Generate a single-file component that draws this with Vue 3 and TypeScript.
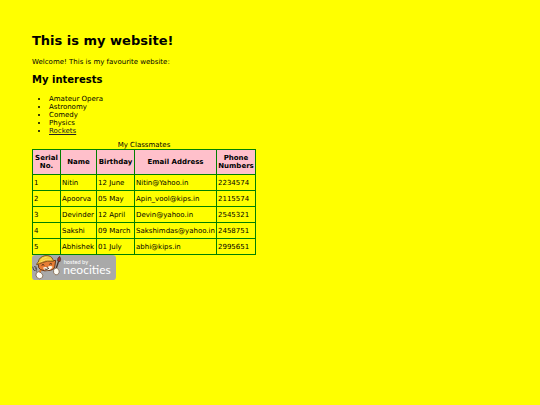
<script setup lang="ts">
interface Classmate {
  serial: number
  name: string
  birthday: string
  email: string
  phone: string
}

const interests: string[] = ['Amateur Opera', 'Astronomy', 'Comedy', 'Physics']

const classmates: Classmate[] = [
  { serial: 1, name: 'Nitin', birthday: '12 June', email: 'Nitin@Yahoo.in', phone: '2234574' },
  { serial: 2, name: 'Apoorva', birthday: '05 May', email: 'Apin_vool@kips.in', phone: '2115574' },
  { serial: 3, name: 'Devinder', birthday: '12 April', email: 'Devin@yahoo.in', phone: '2545321' },
  { serial: 4, name: 'Sakshi', birthday: '09 March', email: 'Sakshimdas@yahoo.in', phone: '2458751' },
  { serial: 5, name: 'Abhishek', birthday: '01 July', email: 'abhi@kips.in', phone: '2995651' },
]
</script>

<template>
  <main class="page">
    <h1>This is my website!</h1>
    <p>Welcome! This is my favourite website:</p>
    <h2>My interests</h2>
    <ul>
      <li v-for="interest in interests" :key="interest">{{ interest }}</li>
      <li><a href="#rockets">Rockets</a></li>
    </ul>
    <table>
      <caption>My Classmates</caption>
      <colgroup>
        <col class="serial" />
        <col class="name" />
        <col class="birthday" />
        <col class="email" />
        <col class="phone" />
      </colgroup>
      <thead>
        <tr>
          <th scope="col">Serial<br />No.</th>
          <th scope="col">Name</th>
          <th scope="col">Birthday</th>
          <th scope="col">Email Address</th>
          <th scope="col">Phone<br />Numbers</th>
        </tr>
      </thead>
      <tbody>
        <tr v-for="mate in classmates" :key="mate.serial">
          <td>{{ mate.serial }}</td>
          <td>{{ mate.name }}</td>
          <td>{{ mate.birthday }}</td>
          <td>{{ mate.email }}</td>
          <td>{{ mate.phone }}</td>
        </tr>
      </tbody>
    </table>
    <a class="host" href="#neocities">
      <svg viewBox="0 0 252 75" role="img">
        <rect width="252" height="75" rx="10" fill="#a9a9a9" />
        <!-- fork and arm -->
        <path d="M2 35l3 10q5 5 9-2l-3-9M7 33l10 24" fill="none" stroke="#4b4a48" stroke-width="3" />
        <path d="M6 34l10 22" stroke="#e4e4e0" stroke-width="1" />
        <path d="M27 42L22 56" stroke="#d97f32" stroke-width="6" />
        <!-- paintbrush -->
        <path d="M80 18L70 48" stroke="#4a3023" stroke-width="4" />
        <path d="M77 18q-2-9 6-14 6 8 1 16z" fill="#a92f27" stroke="#4a3023" stroke-width="2" />
        <!-- paws -->
        <path d="M13 54q6-7 14-1 9 7 4 15-8 7-16 0-5-7-2-14z" fill="#fffdf4" stroke="#6b4a2c" stroke-width="2" />
        <path d="M66 42q7-6 14 1 5 9-3 16-10 3-12-6-1-7 1-11z" fill="#fffdf4" stroke="#6b4a2c" stroke-width="2" />
        <!-- face -->
        <path d="M19 29q4-14 24-16 17-2 22 4l6-1-2 14q0 13-14 16-19 4-29-2-8-4-7-15z" fill="#e77e36" stroke="#653817" stroke-width="3" />
        <path d="M33 38q7-3 12-1 10-7 17-2-4 10-16 11-10 1-13-8z" fill="#fff8e8" />
        <!-- helmet -->
        <path d="M14 29q0-5 5-8 2-15 20-19 19-2 24 12 3 2 1 5-19-3-33 4-8 3-17 6z" fill="#f5cb36" stroke="#76501d" stroke-width="3" />
        <path d="M28 15q6-8 16-8M25 21q14-9 33-6" fill="none" stroke="#ffea83" stroke-width="2" />
        <path d="M18 27q22-13 45-9" fill="none" stroke="#b46a22" stroke-width="2" />
        <!-- eyes, nose and mouth -->
        <path d="M29 31q4-5 8 0M52 28q5-5 8 0M38 42q7 4 13-3" fill="none" stroke="#422918" stroke-width="3" />
        <path d="M43 35h6l-3 4z" fill="#5a2b1b" />
        <text class="hosted" x="95" y="26">hosted by</text>
        <text class="brand" x="94" y="58">neocities</text>
      </svg>
    </a>
  </main>
</template>

<style>
body {
  background: #ffff00;
}
</style>

<style scoped>
.page {
  padding: 32px;
  color: #000;
  font: 7px/8px "DejaVu Sans", Verdana, sans-serif;
}

h1 {
  margin: 0 0 8px;
  font-size: 13px;
  line-height: 18px;
}

p {
  margin: 0 0 8px;
}

h2 {
  margin: 0 0 9px;
  font-size: 10px;
  line-height: 12px;
}

ul {
  margin: 0 0 6px;
  padding-left: 17px;
}

a {
  color: #222;
}

table {
  border-collapse: collapse;
  table-layout: fixed;
  width: 223px;
}

.serial {
  width: 28px;
}

.name {
  width: 36px;
}

.birthday {
  width: 38px;
}

.email {
  width: 82px;
}

.phone {
  width: 39px;
}

th,
td {
  border: 1px solid #008000;
  padding: 0 1px;
  white-space: nowrap;
}

th {
  height: 24px;
  background: #ffc0cb;
  text-align: center;
}

td {
  height: 15px;
  text-align: left;
}

.host {
  display: block;
  width: 84px;
}

.host svg {
  display: block;
  width: 100%;
}

.hosted,
.brand {
  fill: #fff;
  font-family: Lato, "Open Sans", sans-serif;
}

.hosted {
  font-size: 17px;
}

.brand {
  font-size: 36px;
}
</style>
